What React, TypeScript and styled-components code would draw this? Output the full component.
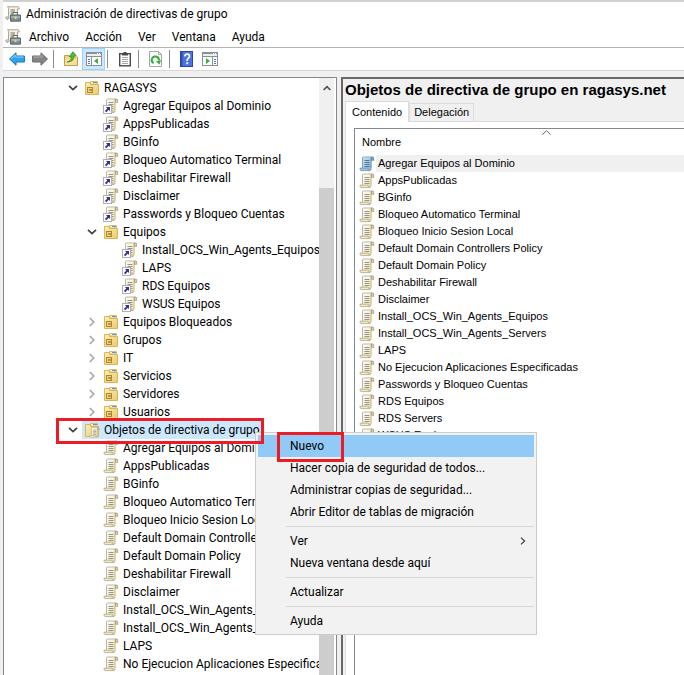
import React, { useId } from "react";
import styled, { createGlobalStyle, css } from "styled-components";

const uiFont = 'Roboto, "Open Sans", sans-serif';
const listFont = '"Liberation Sans", Arial, sans-serif';

const GlobalStyle = createGlobalStyle`
  *, *::before, *::after { box-sizing: border-box; }
  body { margin: 0; background: #f0f0f0; color: #000; }
  button { font: inherit; color: inherit; border: 0; background: none; padding: 0; margin: 0; text-align: left; }
`;

/* ---------- window frame ---------- */

const Page = styled.div`
  position: relative;
  display: flex;
  height: 100vh;
  overflow: hidden;
  padding-left: 3px;
  font: 12px/18px ${uiFont};
`;

const Window = styled.div`
  flex: 1;
  min-width: 0;
  display: flex;
  flex-direction: column;
  border-top: 2px solid #d0d0d0;
`;

const TitleBar = styled.header`
  display: flex;
  align-items: center;
  gap: 5px;
  height: 24px;
  padding-left: 2px;
  background: #fff;
`;

const WindowTitle = styled.h1`
  margin: 0;
  font: inherit;
`;

const MenuBar = styled.nav`
  display: flex;
  align-items: center;
  height: 22px;
  padding-left: 2px;
  background: #fff;
  border-bottom: 1px solid #b4b4b4;
`;

const MenuButton = styled.button`
  height: 20px;
  padding: 0 8px;
`;

const Toolbar = styled.div`
  display: flex;
  align-items: center;
  height: 23px;
  padding-left: 2px;
  background: #fff;
  border-bottom: 1px solid #d7d7d7;
`;

const ToolButton = styled.button<{ $active?: boolean }>`
  display: flex;
  align-items: center;
  justify-content: center;
  width: 23px;
  height: 22px;
  ${(p) => p.$active && css`
    background: #cce8ff;
    border: 1px solid #99d1ff;
  `}
`;

const ToolDivider = styled.span`
  width: 1px;
  height: 18px;
  margin: 0 5px 0 2px;
  background: #8c8c8c;
`;

const Panes = styled.main`
  flex: 1;
  min-height: 0;
  display: grid;
  grid-template-columns: 334px minmax(0, 1fr);
  gap: 4px;
  padding-top: 6px;
`;

/* ---------- tree ---------- */

const TreePane = styled.section`
  display: flex;
  min-height: 0;
  background: #fff;
  border: 1px solid #828790;
  border-bottom: 0;
`;

const Tree = styled.ul`
  flex: 1;
  min-width: 0;
  overflow: hidden;
  list-style: none;
  margin: 0;
  padding: 1px 0 0;
`;

const TreeItem = styled.li<{ $level: number }>`
  display: flex;
  align-items: center;
  height: 18px;
  padding-left: ${(p) => 59 + p.$level * 19}px;
  white-space: nowrap;
`;

const Expander = styled.span`
  flex: none;
  display: flex;
  justify-content: center;
  width: 19px;
`;

const TreeLabel = styled.button<{ $selected?: boolean }>`
  display: flex;
  align-items: center;
  gap: 4px;
  height: 18px;
  padding: 0 2px;
  background: ${(p) => (p.$selected ? "#cce8ff" : "transparent")};
`;

const ScrollBar = styled.div`
  display: flex;
  flex-direction: column;
  width: 17px;
  background: #f0f0f0;
  border-right: 2px solid #fff;
`;

const ScrollUp = styled.button`
  display: flex;
  align-items: center;
  justify-content: center;
  height: 19px;
`;

const ScrollThumb = styled.div`
  flex: 1;
  margin-top: 91px;
  background: #cdcdcd;
`;

/* ---------- details ---------- */

const DetailPane = styled.section`
  display: flex;
  flex-direction: column;
  min-height: 0;
  padding-left: 2px;
  border-top: 2px solid #696969;
  border-left: 2px solid #696969;
  font: 11px/17px ${listFont};
`;

const DetailTitle = styled.h2`
  margin: 0;
  height: 22px;
  font: bold 15px/22px ${listFont};
  white-space: nowrap;
`;

const Tabs = styled.div`
  display: flex;
  align-items: flex-end;
  height: 21px;
  border-bottom: 1px solid #dcdcdc;
`;

const Tab = styled.button<{ $active?: boolean }>`
  height: ${(p) => (p.$active ? 21 : 18)}px;
  padding: 0 ${(p) => (p.$active ? 6 : 4)}px;
  margin-bottom: ${(p) => (p.$active ? -1 : 0)}px;
  background: ${(p) => (p.$active ? "#fff" : "#f0f0f0")};
  border: 1px solid #dcdcdc;
  border-bottom: 0;
  white-space: nowrap;
`;

const TabPage = styled.div`
  flex: 1;
  min-height: 0;
  display: flex;
  padding: 6px 0 0 8px;
  background: #fff;
  border-left: 1px solid #dcdcdc;
`;

const ListView = styled.div`
  flex: 1;
  min-width: 0;
  overflow: hidden;
  border-top: 1px solid #828790;
  border-left: 1px solid #828790;
`;

const Table = styled.table`
  width: 100%;
  border-collapse: collapse;
`;

const HeadCell = styled.th`
  position: relative;
  height: 26px;
  padding: 1px 0 0 7px;
  font-weight: normal;
  text-align: left;
`;

const SortMark = styled.span`
  position: absolute;
  top: 1px;
  left: 187px;
  display: flex;
`;

const Cell = styled.td`
  padding: 0;
`;

const Item = styled.div`
  display: flex;
  align-items: center;
  height: 17px;
  padding-left: 4px;
`;

const ItemName = styled.span<{ $selected?: boolean }>`
  flex: 1;
  margin-left: 1px;
  padding-left: 2px;
  background: ${(p) => (p.$selected ? "#f0f0f0" : "transparent")};
  white-space: nowrap;
`;

/* ---------- context menu and marks ---------- */

const ContextMenu = styled.div`
  position: absolute;
  left: 255px;
  top: 432px;
  width: 282px;
  padding: 2px;
  background: #f2f2f2;
  border: 1px solid #ccc;
`;

const ContextItem = styled.button<{ $active?: boolean }>`
  display: flex;
  align-items: center;
  justify-content: space-between;
  width: 100%;
  height: 22px;
  padding: 0 8px 0 32px;
  background: ${(p) => (p.$active ? "#91c9f7" : "transparent")};
`;

const ContextDivider = styled.hr`
  height: 1px;
  margin: 3px 0 3px 28px;
  border: 0;
  background: #d7d7d7;
`;

const Mark = styled.div<{ $x: number; $y: number; $w: number; $h: number }>`
  position: absolute;
  left: ${(p) => p.$x}px;
  top: ${(p) => p.$y}px;
  width: ${(p) => p.$w}px;
  height: ${(p) => p.$h}px;
  border: 3px solid #ed1c24;
  pointer-events: none;
`;

/* ---------- icons ---------- */

const Icon = styled.svg`
  flex: none;
  display: block;
`;

function ScrollShape({ blue = false }: { blue?: boolean }) {
  const id = useId();
  return (
    <>
      <defs>
        <linearGradient id={id} x1="0" y1="0" x2="1" y2="1">
          <stop offset="0" stopColor={blue ? "#cfe3ee" : "#fffdf0"} />
          <stop offset="1" stopColor={blue ? "#86b6d4" : "#f8e7ac"} />
        </linearGradient>
      </defs>
      <path d="M3.5 1.5H12.5V12.5H3.5Z" fill={`url(#${id})`} />
      <path d="M3.5 12V1.5Q3.6 1 4.5 1H13" fill="none" stroke={blue ? "#7ca5be" : "#b9b6ab"} />
      <path d="M12 1.5V12.5" stroke={blue ? "#6a97b4" : "#c2b484"} />
      <path d="M12.5 1H14Q14.8 1.2 14.7 2.5V4.3H12.5Z" fill={blue ? "#7fb0cc" : "#e9d79b"} stroke={blue ? "#55829e" : "#9a9480"} strokeWidth=".8" />
      <path d="M1 12.2H9.4V13.6Q9.8 14.6 11 14.6H2Q.9 14.4 1 12.2Z" fill={blue ? "#9fc6dc" : "#f8eab4"} stroke={blue ? "#6590ad" : "#aaa48e"} strokeWidth=".8" />
      <path d="M10 12.5H12.5Q12.3 14.7 11 14.7Q9.9 14.4 10 12.5Z" fill={blue ? "#6d9dba" : "#cdbd86"} />
      <path d="M5.5 4.5H10.5M5.5 6.5H10.5M5.5 8.5H10.5M5.5 10.5H10.5" stroke={blue ? "#54789c" : "#92929e"} />
    </>
  );
}

const GpoIcon = ({ blue }: { blue?: boolean }) => (
  <Icon width="16" height="16" viewBox="0 0 16 16" aria-hidden><ScrollShape blue={blue} /></Icon>
);

const LinkIcon = () => (
  <Icon width="16" height="16" viewBox="0 0 16 16" aria-hidden>
    <ScrollShape />
    <rect x=".5" y="7.5" width="8" height="8" fill="#fff" stroke="#b0b0b0" />
    <path d="M3 9H7V13L5.7 11.8L3.2 14.2L1.9 12.9L4.3 10.4Z" fill="#352f96" />
  </Icon>
);

function FolderShape() {
  const id = useId();
  return (
    <>
      <defs>
        <linearGradient id={id} x1="0" y1="0" x2="1" y2="1">
          <stop offset="0" stopColor="#fdeeb4" />
          <stop offset="1" stopColor="#eccb6c" />
        </linearGradient>
      </defs>
      <path d="M6.5 4V1.5H13.5V4Z" fill="#fdf3cd" stroke="#e0bb66" />
      <path d="M9 2.5H13" stroke="#4c9be6" />
      <path d="M1.5 2.5H6.5V4.5H14.5V14.5H1.5Z" fill={`url(#${id})`} stroke="#dcb45c" />
    </>
  );
}

const OuIcon = () => (
  <Icon width="16" height="16" viewBox="0 0 16 16" aria-hidden>
    <FolderShape />
    <rect x="3.5" y="7.5" width="5" height="5" fill="#f0d487" stroke="#ab8630" />
    <rect x="5" y="9" width="3" height="2" fill="#b8933c" />
  </Icon>
);

const GpoFolderIcon = () => (
  <Icon width="16" height="16" viewBox="0 0 16 16" aria-hidden>
    <FolderShape />
    <g transform="translate(5 5) scale(.7)"><ScrollShape /></g>
  </Icon>
);

const ConsoleIcon = () => (
  <Icon width="16" height="16" viewBox="0 0 16 16" aria-hidden>
    <path d="M2.5.8H13.4Q14.6 1.2 14.2 3H12.4V12H3V13.5Q.6 13.6.8 11H3.6V2.5Q3.6 1.4 2.5.8Z" fill="#f8f3dc" stroke="#a5a195" />
    <path d="M5.5 4H10M5.5 6H10M5.5 8H8" stroke="#77736c" />
    <path d="M8 9V6.5H12.5V9" fill="none" stroke="#5f6b74" />
    <path d="M5.5 9H15.5V15.2H5.5Z" fill="#7b8b97" stroke="#5a6872" />
    <path d="M6 11H15" stroke="#c4ced5" />
    <rect x="9.5" y="10.5" width="2" height="2.5" fill="#f0d35a" />
  </Icon>
);

const ArrowIcon = ({ forward = false }: { forward?: boolean }) => (
  <Icon width="16" height="16" viewBox="0 0 16 16" aria-hidden>
    {forward ? (
      <>
        <path d="M15.5 8L9 1.8V5H.6V11H9V14.2Z" fill="#858585" stroke="#6a6a6a" />
        <path d="M1.2 6H10V4" fill="none" stroke="#b0b0b0" />
      </>
    ) : (
      <>
        <path d="M.5 8L7 1.8V5H15.4V11H7V14.2Z" fill="#2ea3ee" stroke="#1672bd" />
        <path d="M2 8L6.2 4V6H14.6" fill="none" stroke="#8fd3fb" />
      </>
    )}
  </Icon>
);

const UpFolderIcon = () => (
  <Icon width="16" height="16" viewBox="0 0 16 16" aria-hidden>
    <path d="M1.5 4.5H6L7 6H14.5V14.5H1.5Z" fill="#f4d27e" stroke="#c99c45" />
    <path d="M2.5 7.5L14 6.5L13.5 14H2Z" fill="#f9df98" />
    <path d="M4 11Q8.6 10 8.4 5.4L6.2 5.6L10 .8L13.2 4.8L11 5Q11 11 4 11Z" fill="#4fc03a" stroke="#2f8d22" strokeWidth=".8" />
  </Icon>
);

const PanelIcon = ({ right = false }: { right?: boolean }) => (
  <Icon width="16" height="14" viewBox="0 0 16 14" aria-hidden>
    <rect x=".5" y=".5" width="15" height="13" fill="#fff" stroke="#8a9096" />
    <path d="M0 1.5H16M0 4.5H16" stroke="#8a9096" />
    <path d="M1 3H15" stroke="#d9dde0" />
    <path d="M11 1.5H12M13 1.5H14" stroke="#fff" />
    {right ? (
      <>
        <path d="M10.5 5V13" stroke="#8a9096" />
        <path d="M12 7.5H14M12 9.5H14M12 11.5H14" stroke="#4876b8" />
        <path d="M4 6V12L8 9Z" fill="#3fae3a" />
      </>
    ) : (
      <>
        <path d="M5.5 5V13" stroke="#8a9096" />
        <path d="M2 7.5H4M2 9.5H4M2 11.5H4" stroke="#4876b8" />
        <path d="M12 6V12L8 9Z" fill="#3fae3a" />
      </>
    )}
  </Icon>
);

const ClipboardIcon = () => (
  <Icon width="14" height="16" viewBox="0 0 14 16" aria-hidden>
    <rect x="1.7" y="2.7" width="10.6" height="12.1" fill="#fff" stroke="#4a4a4a" strokeWidth="1.4" />
    <path d="M4 4.5V2H5.5V1H8.5V2H10V4.5Z" fill="#4a4a4a" />
    <path d="M4 6.5H10M4 8.5H10M4 10.5H10M4 12.5H10" stroke="#a8a8a8" />
  </Icon>
);

const RefreshIcon = () => (
  <Icon width="14" height="16" viewBox="0 0 14 16" aria-hidden>
    <path d="M.5.5H9.5L12.5 3.5V15.5H.5Z" fill="#fbfbfb" stroke="#a6a6a6" />
    <path d="M9.5.5V3.5H12.5" fill="none" stroke="#a6a6a6" />
    <path d="M4.6 12.2A3.6 3.6 0 1 1 9.9 9.4" fill="none" stroke="#36ad3c" strokeWidth="2" />
    <path d="M12 9L10.6 13.4L6.8 10.6Z" fill="#36ad3c" />
  </Icon>
);

const HelpIcon = () => (
  <Icon width="13" height="16" viewBox="0 0 13 16" aria-hidden>
    <rect x=".5" y=".5" width="12" height="15" fill="#4d74dc" stroke="#2847a5" />
    <path d="M1.5 1V15" stroke="#2a4cb8" strokeWidth="2" />
    <path d="M4.8 5.4Q5 3.2 7.2 3.2T9.5 5.3Q9.5 6.6 8.2 7.4T7.2 10" fill="none" stroke="#fff" strokeWidth="1.7" />
    <rect x="6.3" y="11.3" width="1.9" height="1.9" fill="#fff" />
  </Icon>
);

const Chevron = ({ open }: { open: boolean }) =>
  open ? (
    <Icon width="10" height="6" viewBox="0 0 10 6" aria-hidden>
      <path d="M1 .8L5 4.6L9 .8" fill="none" stroke="#404040" strokeWidth="1.7" />
    </Icon>
  ) : (
    <Icon width="6" height="10" viewBox="0 0 6 10" aria-hidden>
      <path d="M.8 1L4.8 5L.8 9" fill="none" stroke="#a6a6a6" strokeWidth="1.6" />
    </Icon>
  );

/* ---------- data ---------- */

type Kind = "ou" | "link" | "gpo" | "gpoFolder";
type Node = { level: number; kind: Kind; name: string; open?: boolean; selected?: boolean };

const node = (level: number, kind: Kind, name: string, open?: boolean, selected?: boolean): Node => ({ level, kind, name, open, selected });

const policies = [
  "Agregar Equipos al Dominio",
  "AppsPublicadas",
  "BGinfo",
  "Bloqueo Automatico Terminal",
  "Bloqueo Inicio Sesion Local",
  "Default Domain Controllers Policy",
  "Default Domain Policy",
  "Deshabilitar Firewall",
  "Disclaimer",
  "Install_OCS_Win_Agents_Equipos",
  "Install_OCS_Win_Agents_Servers",
  "LAPS",
  "No Ejecucion Aplicaciones Especificadas",
  "Passwords y Bloqueo Cuentas",
  "RDS Equipos",
  "RDS Servers",
  "WSUS Equipos",
];

const tree: Node[] = [
  node(0, "ou", "RAGASYS", true),
  node(1, "link", "Agregar Equipos al Dominio"),
  node(1, "link", "AppsPublicadas"),
  node(1, "link", "BGinfo"),
  node(1, "link", "Bloqueo Automatico Terminal"),
  node(1, "link", "Deshabilitar Firewall"),
  node(1, "link", "Disclaimer"),
  node(1, "link", "Passwords y Bloqueo Cuentas"),
  node(1, "ou", "Equipos", true),
  node(2, "link", "Install_OCS_Win_Agents_Equipos"),
  node(2, "link", "LAPS"),
  node(2, "link", "RDS Equipos"),
  node(2, "link", "WSUS Equipos"),
  node(1, "ou", "Equipos Bloqueados", false),
  node(1, "ou", "Grupos", false),
  node(1, "ou", "IT", false),
  node(1, "ou", "Servicios", false),
  node(1, "ou", "Servidores", false),
  node(1, "ou", "Usuarios", false),
  node(0, "gpoFolder", "Objetos de directiva de grupo", true, true),
  ...policies.slice(0, 13).map((name) => node(1, "gpo", name)),
];

const nodeIcons: Record<Kind, React.ReactElement> = {
  ou: <OuIcon />,
  link: <LinkIcon />,
  gpo: <GpoIcon />,
  gpoFolder: <GpoFolderIcon />,
};

const contextGroups = [
  ["Nuevo", "Hacer copia de seguridad de todos...", "Administrar copias de seguridad...", "Abrir Editor de tablas de migración"],
  ["Ver", "Nueva ventana desde aquí"],
  ["Actualizar"],
  ["Ayuda"],
];

export default function App() {
  return (
    <Page>
      <GlobalStyle />
      <Window>
        <TitleBar>
          <ConsoleIcon />
          <WindowTitle>Administración de directivas de grupo</WindowTitle>
        </TitleBar>
        <MenuBar>
          <ConsoleIcon />
          {["Archivo", "Acción", "Ver", "Ventana", "Ayuda"].map((m) => (
            <MenuButton key={m}>{m}</MenuButton>
          ))}
        </MenuBar>
        <Toolbar role="toolbar">
          <ToolButton aria-label="Atrás"><ArrowIcon /></ToolButton>
          <ToolButton aria-label="Adelante"><ArrowIcon forward /></ToolButton>
          <ToolDivider />
          <ToolButton aria-label="Subir un nivel"><UpFolderIcon /></ToolButton>
          <ToolButton aria-label="Mostrar árbol de consola" $active><PanelIcon /></ToolButton>
          <ToolDivider />
          <ToolButton aria-label="Pegar"><ClipboardIcon /></ToolButton>
          <ToolDivider />
          <ToolButton aria-label="Actualizar"><RefreshIcon /></ToolButton>
          <ToolDivider />
          <ToolButton aria-label="Ayuda"><HelpIcon /></ToolButton>
          <ToolButton aria-label="Mostrar panel de acciones"><PanelIcon right /></ToolButton>
        </Toolbar>
        <Panes>
          <TreePane>
            <Tree role="tree">
              {tree.map((n, i) => (
                <TreeItem key={i} role="treeitem" $level={n.level}>
                  <Expander>{n.open !== undefined && <Chevron open={n.open} />}</Expander>
                  <TreeLabel $selected={n.selected}>
                    {nodeIcons[n.kind]}
                    {n.name}
                  </TreeLabel>
                </TreeItem>
              ))}
            </Tree>
            <ScrollBar>
              <ScrollUp aria-label="Desplazar hacia arriba">
                <Icon width="8" height="6" viewBox="0 0 8 6" aria-hidden>
                  <path d="M.6 5L4 1.6L7.4 5" fill="none" stroke="#505050" strokeWidth="1.6" />
                </Icon>
              </ScrollUp>
              <ScrollThumb />
            </ScrollBar>
          </TreePane>
          <DetailPane>
            <DetailTitle>Objetos de directiva de grupo en ragasys.net</DetailTitle>
            <Tabs role="tablist">
              <Tab role="tab" aria-selected $active>Contenido</Tab>
              <Tab role="tab">Delegación</Tab>
            </Tabs>
            <TabPage>
              <ListView>
                <Table>
                  <thead>
                    <tr>
                      <HeadCell>
                        Nombre
                        <SortMark>
                          <Icon width="9" height="5" viewBox="0 0 9 5" aria-hidden>
                            <path d="M.5 4.5L4.5 .7L8.5 4.5" fill="none" stroke="#606060" />
                          </Icon>
                        </SortMark>
                      </HeadCell>
                    </tr>
                  </thead>
                  <tbody>
                    {policies.map((name, i) => (
                      <tr key={name}>
                        <Cell>
                          <Item>
                            <GpoIcon blue={i === 0} />
                            <ItemName $selected={i === 0}>{name}</ItemName>
                          </Item>
                        </Cell>
                      </tr>
                    ))}
                  </tbody>
                </Table>
              </ListView>
            </TabPage>
          </DetailPane>
        </Panes>
      </Window>
      <ContextMenu role="menu">
        {contextGroups.map((group, g) => (
          <React.Fragment key={g}>
            {g > 0 && <ContextDivider />}
            {group.map((label) => (
              <ContextItem key={label} role="menuitem" $active={label === "Nuevo"}>
                {label}
                {label === "Ver" && (
                  <Icon width="6" height="8" viewBox="0 0 6 8" aria-hidden>
                    <path d="M1 .6L4.6 4L1 7.4" fill="none" stroke="#404040" strokeWidth="1.2" />
                  </Icon>
                )}
              </ContextItem>
            ))}
          </React.Fragment>
        ))}
      </ContextMenu>
      <Mark $x={56} $y={418} $w={208} $h={26} />
      <Mark $x={277} $y={432} $w={67} $h={30} />
    </Page>
  );
}
